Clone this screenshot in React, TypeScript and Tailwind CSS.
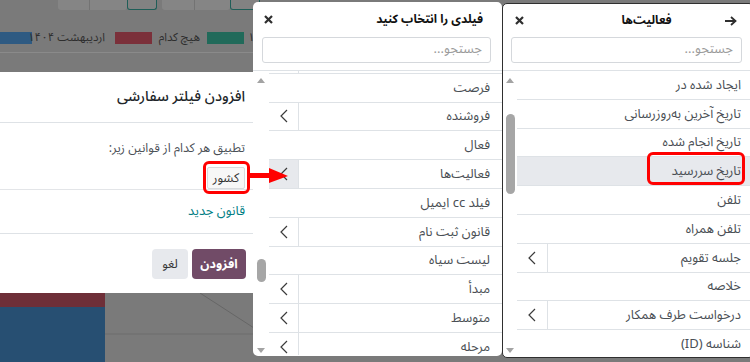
import React from "react";

type Field = { label: string; sub?: boolean; hover?: boolean; active?: boolean; cut?: boolean };

const mainFields: Field[] = [
  { label: "", sub: true },
  { label: "فرصت" },
  { label: "فروشنده", sub: true },
  { label: "فعال" },
  { label: "فعالیت‌ها", sub: true, hover: true },
  { label: "فیلد cc ایمیل" },
  { label: "قانون ثبت نام", sub: true },
  { label: "لیست سیاه" },
  { label: "مبدأ", sub: true },
  { label: "متوسط", sub: true },
  { label: "مرحله", sub: true, cut: true },
];

const activityFields: Field[] = [
  { label: "ایجاد شده در" },
  { label: "تاریخ آخرین به‌روزرسانی" },
  { label: "تاریخ انجام شده" },
  { label: "تاریخ سررسید", active: true },
  { label: "تلفن" },
  { label: "تلفن همراه" },
  { label: "جلسه تقویم", sub: true },
  { label: "خلاصه" },
  { label: "درخواست طرف همکار", sub: true },
  { label: "شناسه (ID)" },
];

const Chevron = () => (
  <svg width="8" height="14" viewBox="0 0 8 14" fill="none">
    <polyline points="7,1 1,7 7,13" stroke="#3b3b3b" strokeWidth="1.2" />
  </svg>
);

const CloseIcon = () => (
  <svg width="9" height="9" viewBox="0 0 9 9">
    <path d="M1 1 L8 8 M8 1 L1 8" stroke="#2f2f2f" strokeWidth="2.2" />
  </svg>
);

const ArrowRight = () => (
  <svg width="12" height="10" viewBox="0 0 12 10" fill="none">
    <path d="M0 5 H10 M6 1 L10.5 5 L6 9" stroke="#2f2f2f" strokeWidth="1.8" />
  </svg>
);

const TriUp = () => (
  <svg width="8" height="5" viewBox="0 0 8 5">
    <polygon points="0,5 4,0 8,5" fill="#a3a3a3" />
  </svg>
);

const TriDown = () => (
  <svg width="8" height="5" viewBox="0 0 8 5">
    <polygon points="0,0 8,0 4,5" fill="#a3a3a3" />
  </svg>
);

const FieldRow = ({ field, cellW }: { field: Field; cellW: string }) => (
  <div
    className={`flex shrink-0 ${
      field.cut ? "h-[22px] items-start" : "h-[28.8px] border-b border-[#dee2e6]"
    } ${field.active ? "bg-[#e7e9ed]" : ""}`}
  >
    {field.sub && (
      <div
        className={`flex ${cellW} justify-center self-stretch border-r border-[#dee2e6] ${
          field.cut ? "items-start pt-[7px]" : "items-center"
        } ${field.hover ? "bg-[#e7e9ed]" : ""}`}
      >
        <Chevron />
      </div>
    )}
    <div
      className={`flex flex-1 justify-end pr-[12px] text-[13px] leading-[14px] text-[#4a4f55] ${
        field.cut ? "items-start pt-[7px]" : "items-center"
      }`}
    >
      <span dir="rtl">{field.label}</span>
    </div>
  </div>
);

const SearchBox = ({ cls }: { cls: string }) => (
  <div
    className={`flex h-[26px] items-center justify-end rounded-[3px] border border-[#d5d8dc] pr-[8px] text-[13px] text-[#9a9a9a] ${cls}`}
  >
    <span dir="rtl">جستجو...</span>
  </div>
);

export default function App() {
  return (
    <div className="relative h-[362px] w-[750px] overflow-hidden bg-[#7a7a7a] font-['Noto_Sans_Arabic','DejaVu_Sans',sans-serif]">
      {/* dimmed page behind */}
      <div className="flex h-[10px]">
        <div className="ml-[58px] flex h-[10px] rounded-b-[3px] bg-[#858585]">
          <div className="w-[32px] border-r border-[#737373]" />
          <div className="w-[37px]" />
        </div>
        <div className="h-[10px] w-[30px] rounded-b-[3px] border border-t-0 border-[#1f5e58] bg-[#828282]" />
        <div className="ml-[5px] flex h-[10px] rounded-b-[3px] bg-[#858585]">
          <div className="w-[33px] border-r border-[#737373]" />
          <div className="w-[35px]" />
        </div>
        <div className="h-[10px] w-[30px] rounded-b-[3px] border border-t-0 border-[#1f5e58] bg-[#828282]" />
      </div>

      <div className="mt-[22px] flex h-[12px] items-center whitespace-nowrap text-[11.5px] text-[#2e2e2e]">
        <div className="h-[12px] w-[32px] shrink-0 bg-[#2e5a82]" />
        <div className="ml-[5px] flex w-[68px] shrink-0 justify-end leading-none">
          <span dir="rtl">اردیبهشت ۱۴۰۴</span>
        </div>
        <div className="ml-[10px] h-[12px] w-[37px] shrink-0 bg-[#7b303a]" />
        <div className="ml-[3px] flex w-[45px] shrink-0 justify-end leading-none">
          <span dir="rtl">هیچ کدام</span>
        </div>
        <div className="ml-[7px] h-[12px] w-[37px] shrink-0 bg-[#216a5a]" />
        <div className="ml-[4px] leading-none">۱</div>
      </div>
      <div className="mt-[8px] h-px w-full bg-[#8a8a8a]" />

      <svg width="750" height="309" className="block">
        <rect x="0" y="240" width="105" height="14" fill="#6e2f38" />
        <rect x="0" y="254" width="105" height="60" fill="#274f72" />
        <line x1="200" y1="240" x2="254" y2="275" stroke="#666" strokeWidth="1" />
        <line x1="105" y1="281" x2="254" y2="281" stroke="#6c6c6c" strokeWidth="1" />
      </svg>

      {/* custom filter dialog */}
      <div className="absolute left-[-20px] top-[72px] flex h-[221px] w-[273px] flex-col bg-white">
        <div className="flex h-[51px] shrink-0 items-center justify-end border-b border-[#dee2e6] pr-[8px] text-[14.5px] font-medium text-[#212529]">
          <span dir="rtl">افزودن فیلتر سفارشی</span>
        </div>
        <div className="flex h-[67px] shrink-0 flex-col items-end border-b border-[#e3e5e8] pr-[8px] pt-[17px]">
          <span dir="rtl" className="text-[12.5px] leading-[16px] text-[#4b5057]">
            تطبیق هر کدام از قوانین زیر:
          </span>
          <div className="mt-[11px] flex h-[22px] w-[38px] items-center justify-center rounded-[2px] border border-[#d8dadd] bg-[#f7f7f7] text-[12.5px] text-[#333]">
            <span dir="rtl">کشور</span>
          </div>
        </div>
        <div className="flex h-[44px] shrink-0 items-center justify-end border-b border-[#dee2e6] pr-[8px] text-[13px] text-[#017e84]">
          <span dir="rtl">قانون جدید</span>
        </div>
        <div className="flex justify-end gap-[4px] pr-[7px] pt-[15px]">
          <div className="flex h-[30px] w-[36px] items-center justify-center rounded-[4px] bg-[#e7e9ed] text-[12.5px] text-[#333]">
            لغو
          </div>
          <div className="flex h-[30px] w-[54px] items-center justify-center rounded-[4px] bg-[#714b67] text-[12.5px] font-bold text-white">
            افزودن
          </div>
        </div>
      </div>

      {/* field picker */}
      <div className="absolute left-[253px] top-[2px] flex h-[354px] w-[249px] flex-col overflow-hidden rounded-[5px] bg-white">
        <div className="flex h-[35px] shrink-0 items-center justify-between pl-[11px] pr-[19px]">
          <CloseIcon />
          <span dir="rtl" className="text-[12px] font-bold text-[#111]">
            فیلدی را انتخاب کنید
          </span>
        </div>
        <SearchBox cls="ml-[9px] mr-[11px]" />
        <div className="mt-[7px] flex min-h-0 flex-1 border-t border-[#dee2e6]">
          <div className="flex w-[16px] shrink-0 flex-col items-center pt-[7px]">
            <TriUp />
            <div className="mt-[176px] h-[23px] w-[9px] rounded-full bg-[#a6a6a6]" />
            <div className="flex-1" />
            <div className="pb-[3px]">
              <TriDown />
            </div>
          </div>
          <div className="flex min-w-0 flex-1 flex-col overflow-hidden">
            <div className="mt-[-26px] flex flex-col">
              {mainFields.map((f, i) => (
                <FieldRow key={i} field={f} cellW="w-[30px]" />
              ))}
            </div>
          </div>
        </div>
      </div>

      {/* activity sub-fields */}
      <div className="absolute left-[502px] top-[3px] flex h-[355px] w-[252px] flex-col overflow-hidden rounded-[5px] border border-[#2f2f2f] bg-white">
        <div className="flex h-[33px] shrink-0 items-center pl-[12px] pr-[16px]">
          <CloseIcon />
          <div className="flex flex-1 justify-center pl-[44px]">
            <span dir="rtl" className="text-[12px] font-bold text-[#111]">
              فعالیت‌ها
            </span>
          </div>
          <ArrowRight />
        </div>
        <SearchBox cls="ml-[8px] mr-[11px]" />
        <div className="mt-[7px] flex min-h-0 flex-1 border-t border-[#dee2e6]">
          <div className="flex w-[14px] shrink-0 flex-col items-center pt-[7px]">
            <TriUp />
            <div className="mt-[31px] h-[80px] w-[9px] rounded-full bg-[#a6a6a6]" />
            <div className="flex-1" />
            <div className="pb-[4px]">
              <TriDown />
            </div>
          </div>
          <div className="flex min-w-0 flex-1 flex-col overflow-hidden">
            {activityFields.map((f, i) => (
              <FieldRow key={i} field={f} cellW="w-[31px]" />
            ))}
          </div>
        </div>
      </div>

      {/* annotations */}
      <div className="absolute left-[203px] top-[161px] h-[33px] w-[47px] rounded-[6px] border-[3px] border-[#ff0000]" />
      <svg className="absolute left-[248px] top-[166px]" width="42" height="20" viewBox="0 0 42 20">
        <rect x="0" y="7" width="24" height="5" fill="#ff0000" />
        <polygon points="21,2 40,10 21,17" fill="#ff0000" />
      </svg>
      <div className="absolute left-[647px] top-[152px] h-[33px] w-[98px] rounded-[6px] border-[3px] border-[#ff0000]" />
    </div>
  );
}
